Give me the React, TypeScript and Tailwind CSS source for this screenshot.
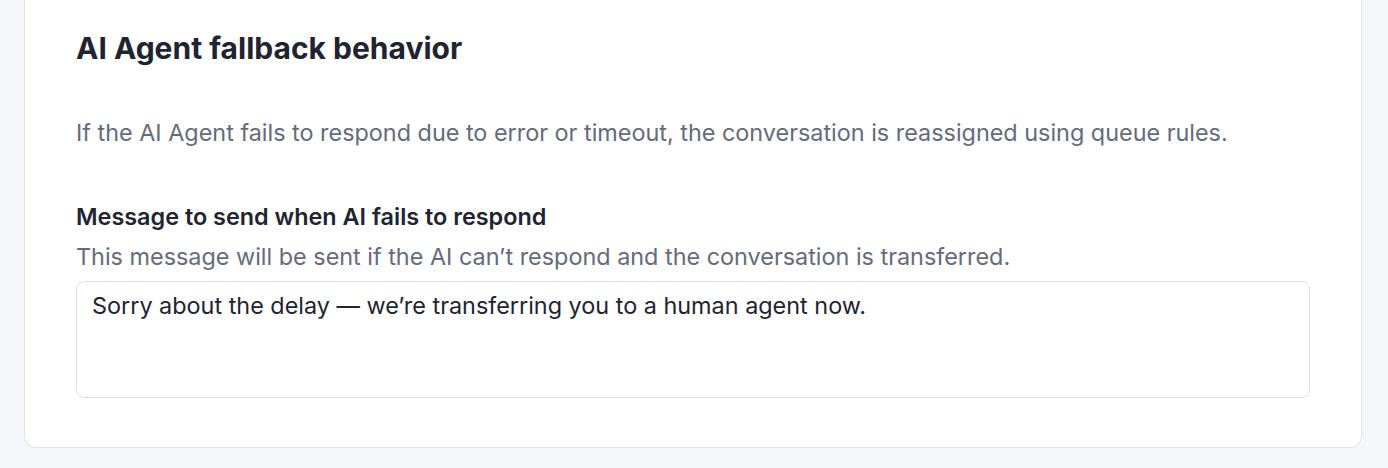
export default function App() {
  return (
    <div
      className="h-[468px] bg-[#f6f7fb] pl-6 pr-[26px] pb-5"
      style={{ fontFamily: 'Inter, "Noto Sans", sans-serif' }}
    >
      <div className="h-full rounded-b-xl border border-t-0 border-[#e2e4ec] bg-white px-[51px] pt-[30px]">
        <h2 className="text-[30px] font-bold leading-[36px] text-[#1f2430]">
          AI Agent fallback behavior
        </h2>
        <p className="mt-[51px] text-[23.4px] leading-[32px] text-[#646b7b]">
          If the AI Agent fails to respond due to error or timeout, the conversation is reassigned using queue rules.
        </p>
        <div className="mt-[52px]">
          <label className="block text-[23.4px] font-semibold leading-[32px] text-[#1f2430]">
            Message to send when AI fails to respond
          </label>
          <p className="mt-[8px] text-[23.4px] leading-[32px] text-[#646b7b]">
            This message will be sent if the AI can’t respond and the conversation is transferred.
          </p>
          <textarea
            className="mt-[8px] block h-[117px] w-full resize-none rounded-lg border border-[#dcdfe6] px-[15px] pt-[8px] text-[23.4px] leading-[32px] text-[#1f2430] outline-none"
            defaultValue="Sorry about the delay — we’re transferring you to a human agent now."
          />
        </div>
      </div>
    </div>
  )
}
